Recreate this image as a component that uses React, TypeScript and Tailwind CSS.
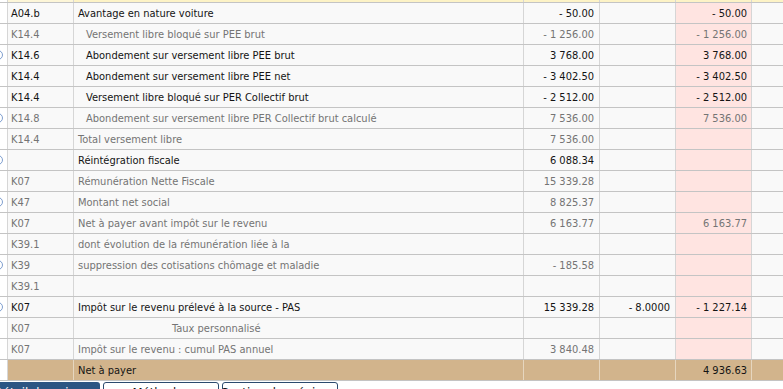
import React from "react";

type Row = {
  code: string;
  label: string;
  indent?: "none" | "small" | "center";
  base?: string;
  rate?: string;
  amount?: string;
  dark?: boolean;
  icon?: boolean;
  total?: boolean;
};

const rows: Row[] = [
  { code: "A04.b", label: "Avantage en nature voiture", base: "- 50.00", amount: "- 50.00", dark: true },
  { code: "K14.4", label: "Versement libre bloqué sur PEE brut", indent: "small", base: "- 1 256.00", amount: "- 1 256.00" },
  { code: "K14.6", label: "Abondement sur versement libre PEE brut", indent: "small", base: "3 768.00", amount: "3 768.00", dark: true, icon: true },
  { code: "K14.4", label: "Abondement sur versement libre PEE net", indent: "small", base: "- 3 402.50", amount: "- 3 402.50", dark: true },
  { code: "K14.4", label: "Versement libre bloqué sur PER Collectif brut", indent: "small", base: "- 2 512.00", amount: "- 2 512.00", dark: true },
  { code: "K14.8", label: "Abondement sur versement libre PER Collectif brut calculé", indent: "small", base: "7 536.00", amount: "7 536.00", icon: true },
  { code: "K14.4", label: "Total versement libre", base: "7 536.00" },
  { code: "", label: "Réintégration fiscale", base: "6 088.34", dark: true, icon: true },
  { code: "K07", label: "Rémunération Nette Fiscale", base: "15 339.28" },
  { code: "K47", label: "Montant net social", base: "8 825.37", icon: true },
  { code: "K07", label: "Net à payer avant impôt sur le revenu", base: "6 163.77", amount: "6 163.77" },
  { code: "K39.1", label: "dont évolution de la rémunération liée à la" },
  { code: "K39", label: "suppression des cotisations chômage et maladie", base: "- 185.58", icon: true },
  { code: "K39.1", label: "" },
  { code: "K07", label: "Impôt sur le revenu prélevé à la source - PAS", base: "15 339.28", rate: "- 8.0000", amount: "- 1 227.14", dark: true, icon: true },
  { code: "K07", label: "Taux personnalisé", indent: "center" },
  { code: "K07", label: "Impôt sur le revenu : cumul PAS annuel", base: "3 840.48" },
  { code: "", label: "Net à payer", amount: "4 936.63", dark: true, total: true },
];

function GutterIcon() {
  return (
    <div className="w-[10px] h-[10px] rounded-full border border-[#7f9fcf] shrink-0" />
  );
}

function RowView({ r }: { r: Row }) {
  const color = r.dark ? "text-[#141414]" : "text-[#747474]";
  const cellBg = r.total ? "bg-[#d2b48c]" : "bg-[#f9f9f9]";
  const amtBg = r.total ? "bg-[#d2b48c]" : "bg-[#ffe4e1]";
  const vBorder = r.total ? "border-[#e6d6bf]" : "border-[#d6d6d6]";
  const indent =
    r.indent === "small" ? "pl-[12px]" : r.indent === "center" ? "pl-[98px]" : "pl-[4px]";
  return (
    <div className={`flex h-[21px] border-b border-[#c4c4c4] ${color}`}>
      <div className="w-[8px] shrink-0 bg-white border-r border-[#d6d6d6] flex items-center justify-end overflow-hidden pr-[4px]">
        {r.icon ? <GutterIcon /> : null}
      </div>
      <div className={`w-[66px] shrink-0 ${cellBg} border-r ${vBorder} flex items-center pl-[3px]`}>
        {r.code}
      </div>
      <div className={`w-[450px] shrink-0 ${cellBg} border-r ${vBorder} flex items-center ${indent} whitespace-nowrap`}>
        {r.label}
      </div>
      <div className={`w-[76px] shrink-0 ${cellBg} border-r ${vBorder} flex items-center justify-end pr-[5px] whitespace-nowrap`}>
        {r.base ?? ""}
      </div>
      <div className={`w-[76px] shrink-0 ${cellBg} border-r ${vBorder} flex items-center justify-end pr-[5px] whitespace-nowrap`}>
        {r.rate ?? ""}
      </div>
      <div className={`w-[76px] shrink-0 ${amtBg} border-r ${vBorder} flex items-center justify-end pr-[4px] whitespace-nowrap`}>
        {r.amount ?? ""}
      </div>
      <div className={`flex-1 ${cellBg}`} />
    </div>
  );
}

export default function App() {
  return (
    <div
      className="w-[783px] h-[389px] overflow-hidden bg-white text-[11px] leading-none"
      style={{ fontFamily: '"DejaVu Sans Condensed", "DejaVu Sans", sans-serif' }}
    >
      <div className="flex h-[3px] border-b border-[#c4c4c4]">
        <div className="w-[8px] shrink-0 bg-white border-r border-[#d6d6d6]" />
        <div className="w-[66px] shrink-0 bg-[#fdf6d8] border-r border-[#d6d6d6]" />
        <div className="w-[450px] shrink-0 bg-[#fdf3c6] border-r border-[#d6d6d6]" />
        <div className="w-[76px] shrink-0 bg-[#fdf3c6] border-r border-[#d6d6d6]" />
        <div className="w-[76px] shrink-0 bg-[#fdf3c6] border-r border-[#d6d6d6]" />
        <div className="w-[76px] shrink-0 bg-[#fdf3c6] border-r border-[#d6d6d6]" />
        <div className="flex-1 bg-[#fdf3c6]" />
      </div>
      {rows.map((r, i) => (
        <RowView key={i} r={r} />
      ))}
      <div className="flex gap-[3px] pt-[1px] text-[13px] leading-none">
        <div className="w-[100px] h-[24px] bg-[#2c5583] text-white rounded-tr-[3px] flex justify-center pt-[4px] whitespace-nowrap overflow-hidden">
          Détail du paiement
        </div>
        <div className="w-[116px] h-[24px] bg-white border border-[#2c4a6e] rounded-t-[3px] text-[#111] flex justify-center pt-[3px] whitespace-nowrap overflow-hidden">
          Méthodes
        </div>
        <div className="w-[116px] h-[24px] bg-white border border-[#2c4a6e] rounded-t-[3px] text-[#111] flex justify-center pt-[3px] whitespace-nowrap overflow-hidden">
          Gestion des régimes
        </div>
      </div>
    </div>
  );
}
